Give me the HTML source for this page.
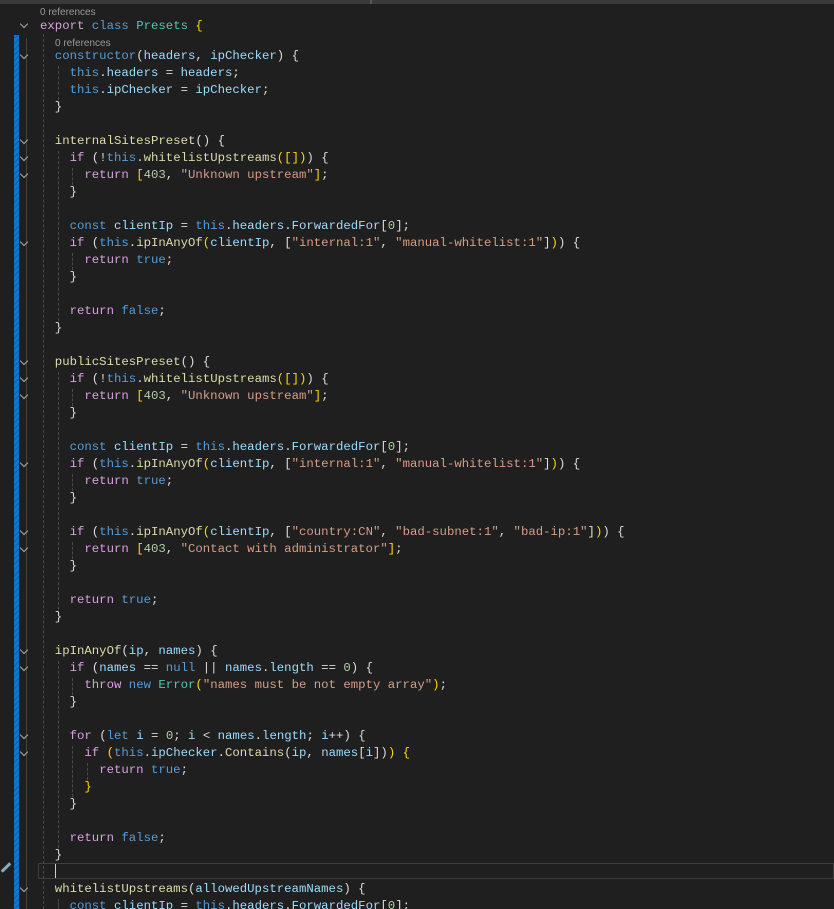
<!DOCTYPE html>
<html><head><meta charset="utf-8"><style>
html,body{margin:0;padding:0;background:#1f1f1f;width:834px;height:909px;overflow:hidden;position:relative}
.r{position:absolute;left:40px;height:17px;line-height:17px;font-family:"Liberation Mono",monospace;font-size:12.33px;color:#dcdcdc;white-space:pre;margin-top:2px}
.k{color:#d8a0df}.b{color:#569cd6}.f{color:#dcdcaa}.v{color:#9cdcfe}.s{color:#d69d85}.n{color:#b5cea8}.t{color:#4ec9b0}
.y{color:#ffd700}.p{color:#dcdcdc}.q{color:#dcdcdc}
.cl{position:absolute;font-family:"Liberation Sans",sans-serif;font-size:10px;color:#999;margin-top:2px}
.g{position:absolute;width:0;border-left:1px dashed #4a4a4a}
.ch{position:absolute;left:21px;width:5px;height:5px;border-right:1.3px solid #aaa;border-bottom:1.3px solid #aaa;transform:rotate(45deg);margin-top:1px}
</style></head><body>
<div style="position:absolute;left:0;top:0;width:834px;height:4px;background:#3a3a3a"></div>
<div style="position:absolute;left:370px;top:0;width:2px;height:4px;background:#555"></div>
<div style="position:absolute;left:14px;top:35px;width:5px;height:874px;background:repeating-linear-gradient(135deg,#0a78d4 0 2px,#1f5a90 2px 3px,#0a78d4 3px 4px)"></div>
<div style="position:absolute;left:26px;top:38px;width:1px;height:871px;background:#444"></div>
<div style="position:absolute;left:38px;top:863px;width:796px;height:16px;border:1px solid #3e3e3e;box-sizing:border-box"></div>
<div style="position:absolute;left:55px;top:864px;width:1px;height:14px;background:#ccc"></div>
<div style="position:absolute;left:0px;top:866px;width:12px;height:3px;background:#8ab;transform:rotate(-45deg)"></div>

<div class="cl" style="left:40px;top:5px">0 references</div>
<div class="cl" style="left:55px;top:36px">0 references</div>

<div class="g" style="left:43px;top:34px;height:875px"></div>
<div class="g" style="left:58px;top:66px;height:34px"></div>
<div class="g" style="left:58px;top:151px;height:170px"></div>
<div class="g" style="left:58px;top:372px;height:238px"></div>
<div class="g" style="left:58px;top:661px;height:187px"></div>
<div class="g" style="left:58px;top:899px;height:10px"></div>
<div class="g" style="left:72px;top:168px;height:17px"></div>
<div class="g" style="left:72px;top:253px;height:17px"></div>
<div class="g" style="left:72px;top:389px;height:17px"></div>
<div class="g" style="left:72px;top:474px;height:17px"></div>
<div class="g" style="left:72px;top:542px;height:17px"></div>
<div class="g" style="left:72px;top:678px;height:17px"></div>
<div class="g" style="left:72px;top:746px;height:51px"></div>
<div class="g" style="left:87px;top:763px;height:17px"></div>

<div class="ch" style="top:20px"></div>
<div class="ch" style="top:51px"></div>
<div class="ch" style="top:136px"></div>
<div class="ch" style="top:153px"></div>
<div class="ch" style="top:170px"></div>
<div class="ch" style="top:238px"></div>
<div class="ch" style="top:357px"></div>
<div class="ch" style="top:374px"></div>
<div class="ch" style="top:391px"></div>
<div class="ch" style="top:459px"></div>
<div class="ch" style="top:527px"></div>
<div class="ch" style="top:544px"></div>
<div class="ch" style="top:646px"></div>
<div class="ch" style="top:663px"></div>
<div class="ch" style="top:731px"></div>
<div class="ch" style="top:748px"></div>
<div class="ch" style="top:884px"></div>

<div class="r" style="top:16px"><span class="k">export</span> <span class="b">class</span> <span class="t">Presets</span> <span class="y">{</span></div>
<div class="r" style="top:46px">  <span class="b">constructor</span><span class="p">(</span><span class="v">headers</span>, <span class="v">ipChecker</span><span class="p">)</span> <span class="p">{</span></div>
<div class="r" style="top:63px">    <span class="b">this</span>.<span class="v">headers</span> = <span class="v">headers</span>;</div>
<div class="r" style="top:80px">    <span class="b">this</span>.<span class="v">ipChecker</span> = <span class="v">ipChecker</span>;</div>
<div class="r" style="top:97px">  <span class="p">}</span></div>
<div class="r" style="top:131px">  <span class="f">internalSitesPreset</span><span class="p">()</span> <span class="p">{</span></div>
<div class="r" style="top:148px">    <span class="k">if</span> <span class="q">(</span>!<span class="b">this</span>.<span class="f">whitelistUpstreams</span><span class="y">([])</span><span class="q">)</span> <span class="q">{</span></div>
<div class="r" style="top:165px">      <span class="k">return</span> <span class="y">[</span><span class="n">403</span>, <span class="s">"Unknown upstream"</span><span class="y">]</span>;</div>
<div class="r" style="top:182px">    <span class="q">}</span></div>
<div class="r" style="top:216px">    <span class="b">const</span> <span class="v">clientIp</span> = <span class="b">this</span>.<span class="v">headers</span>.<span class="v">ForwardedFor</span><span class="q">[</span><span class="n">0</span><span class="q">]</span>;</div>
<div class="r" style="top:233px">    <span class="k">if</span> <span class="q">(</span><span class="b">this</span>.<span class="f">ipInAnyOf</span><span class="y">(</span><span class="v">clientIp</span>, <span class="p">[</span><span class="s">"internal:1"</span>, <span class="s">"manual-whitelist:1"</span><span class="p">]</span><span class="y">)</span><span class="q">)</span> <span class="q">{</span></div>
<div class="r" style="top:250px">      <span class="k">return</span> <span class="b">true</span>;</div>
<div class="r" style="top:267px">    <span class="q">}</span></div>
<div class="r" style="top:301px">    <span class="k">return</span> <span class="b">false</span>;</div>
<div class="r" style="top:318px">  <span class="p">}</span></div>
<div class="r" style="top:352px">  <span class="f">publicSitesPreset</span><span class="p">()</span> <span class="p">{</span></div>
<div class="r" style="top:369px">    <span class="k">if</span> <span class="q">(</span>!<span class="b">this</span>.<span class="f">whitelistUpstreams</span><span class="y">([])</span><span class="q">)</span> <span class="q">{</span></div>
<div class="r" style="top:386px">      <span class="k">return</span> <span class="y">[</span><span class="n">403</span>, <span class="s">"Unknown upstream"</span><span class="y">]</span>;</div>
<div class="r" style="top:403px">    <span class="q">}</span></div>
<div class="r" style="top:437px">    <span class="b">const</span> <span class="v">clientIp</span> = <span class="b">this</span>.<span class="v">headers</span>.<span class="v">ForwardedFor</span><span class="q">[</span><span class="n">0</span><span class="q">]</span>;</div>
<div class="r" style="top:454px">    <span class="k">if</span> <span class="q">(</span><span class="b">this</span>.<span class="f">ipInAnyOf</span><span class="y">(</span><span class="v">clientIp</span>, <span class="p">[</span><span class="s">"internal:1"</span>, <span class="s">"manual-whitelist:1"</span><span class="p">]</span><span class="y">)</span><span class="q">)</span> <span class="q">{</span></div>
<div class="r" style="top:471px">      <span class="k">return</span> <span class="b">true</span>;</div>
<div class="r" style="top:488px">    <span class="q">}</span></div>
<div class="r" style="top:522px">    <span class="k">if</span> <span class="q">(</span><span class="b">this</span>.<span class="f">ipInAnyOf</span><span class="y">(</span><span class="v">clientIp</span>, <span class="p">[</span><span class="s">"country:CN"</span>, <span class="s">"bad-subnet:1"</span>, <span class="s">"bad-ip:1"</span><span class="p">]</span><span class="y">)</span><span class="q">)</span> <span class="q">{</span></div>
<div class="r" style="top:539px">      <span class="k">return</span> <span class="y">[</span><span class="n">403</span>, <span class="s">"Contact with administrator"</span><span class="y">]</span>;</div>
<div class="r" style="top:556px">    <span class="q">}</span></div>
<div class="r" style="top:590px">    <span class="k">return</span> <span class="b">true</span>;</div>
<div class="r" style="top:607px">  <span class="p">}</span></div>
<div class="r" style="top:641px">  <span class="f">ipInAnyOf</span><span class="p">(</span><span class="v">ip</span>, <span class="v">names</span><span class="p">)</span> <span class="p">{</span></div>
<div class="r" style="top:658px">    <span class="k">if</span> <span class="q">(</span><span class="v">names</span> == <span class="b">null</span> || <span class="v">names</span>.<span class="v">length</span> == <span class="n">0</span><span class="q">)</span> <span class="q">{</span></div>
<div class="r" style="top:675px">      <span class="k">throw</span> <span class="b">new</span> <span class="t">Error</span><span class="y">(</span><span class="s">"names must be not empty array"</span><span class="y">)</span>;</div>
<div class="r" style="top:692px">    <span class="q">}</span></div>
<div class="r" style="top:726px">    <span class="k">for</span> <span class="q">(</span><span class="b">let</span> <span class="v">i</span> = <span class="n">0</span>; <span class="v">i</span> &lt; <span class="v">names</span>.<span class="v">length</span>; <span class="v">i</span>++<span class="q">)</span> <span class="q">{</span></div>
<div class="r" style="top:743px">      <span class="k">if</span> <span class="y">(</span><span class="b">this</span>.<span class="v">ipChecker</span>.<span class="f">Contains</span><span class="p">(</span><span class="v">ip</span>, <span class="v">names</span><span class="q">[</span><span class="v">i</span><span class="q">]</span><span class="p">)</span><span class="y">)</span> <span class="y">{</span></div>
<div class="r" style="top:760px">        <span class="k">return</span> <span class="b">true</span>;</div>
<div class="r" style="top:777px">      <span class="y">}</span></div>
<div class="r" style="top:794px">    <span class="q">}</span></div>
<div class="r" style="top:828px">    <span class="k">return</span> <span class="b">false</span>;</div>
<div class="r" style="top:845px">  <span class="p">}</span></div>
<div class="r" style="top:879px">  <span class="f">whitelistUpstreams</span><span class="p">(</span><span class="v">allowedUpstreamNames</span><span class="p">)</span> <span class="p">{</span></div>
<div class="r" style="top:896px">    <span class="b">const</span> <span class="v">clientIp</span> = <span class="b">this</span>.<span class="v">headers</span>.<span class="v">ForwardedFor</span><span class="q">[</span><span class="n">0</span><span class="q">]</span>;</div>
</body></html>
